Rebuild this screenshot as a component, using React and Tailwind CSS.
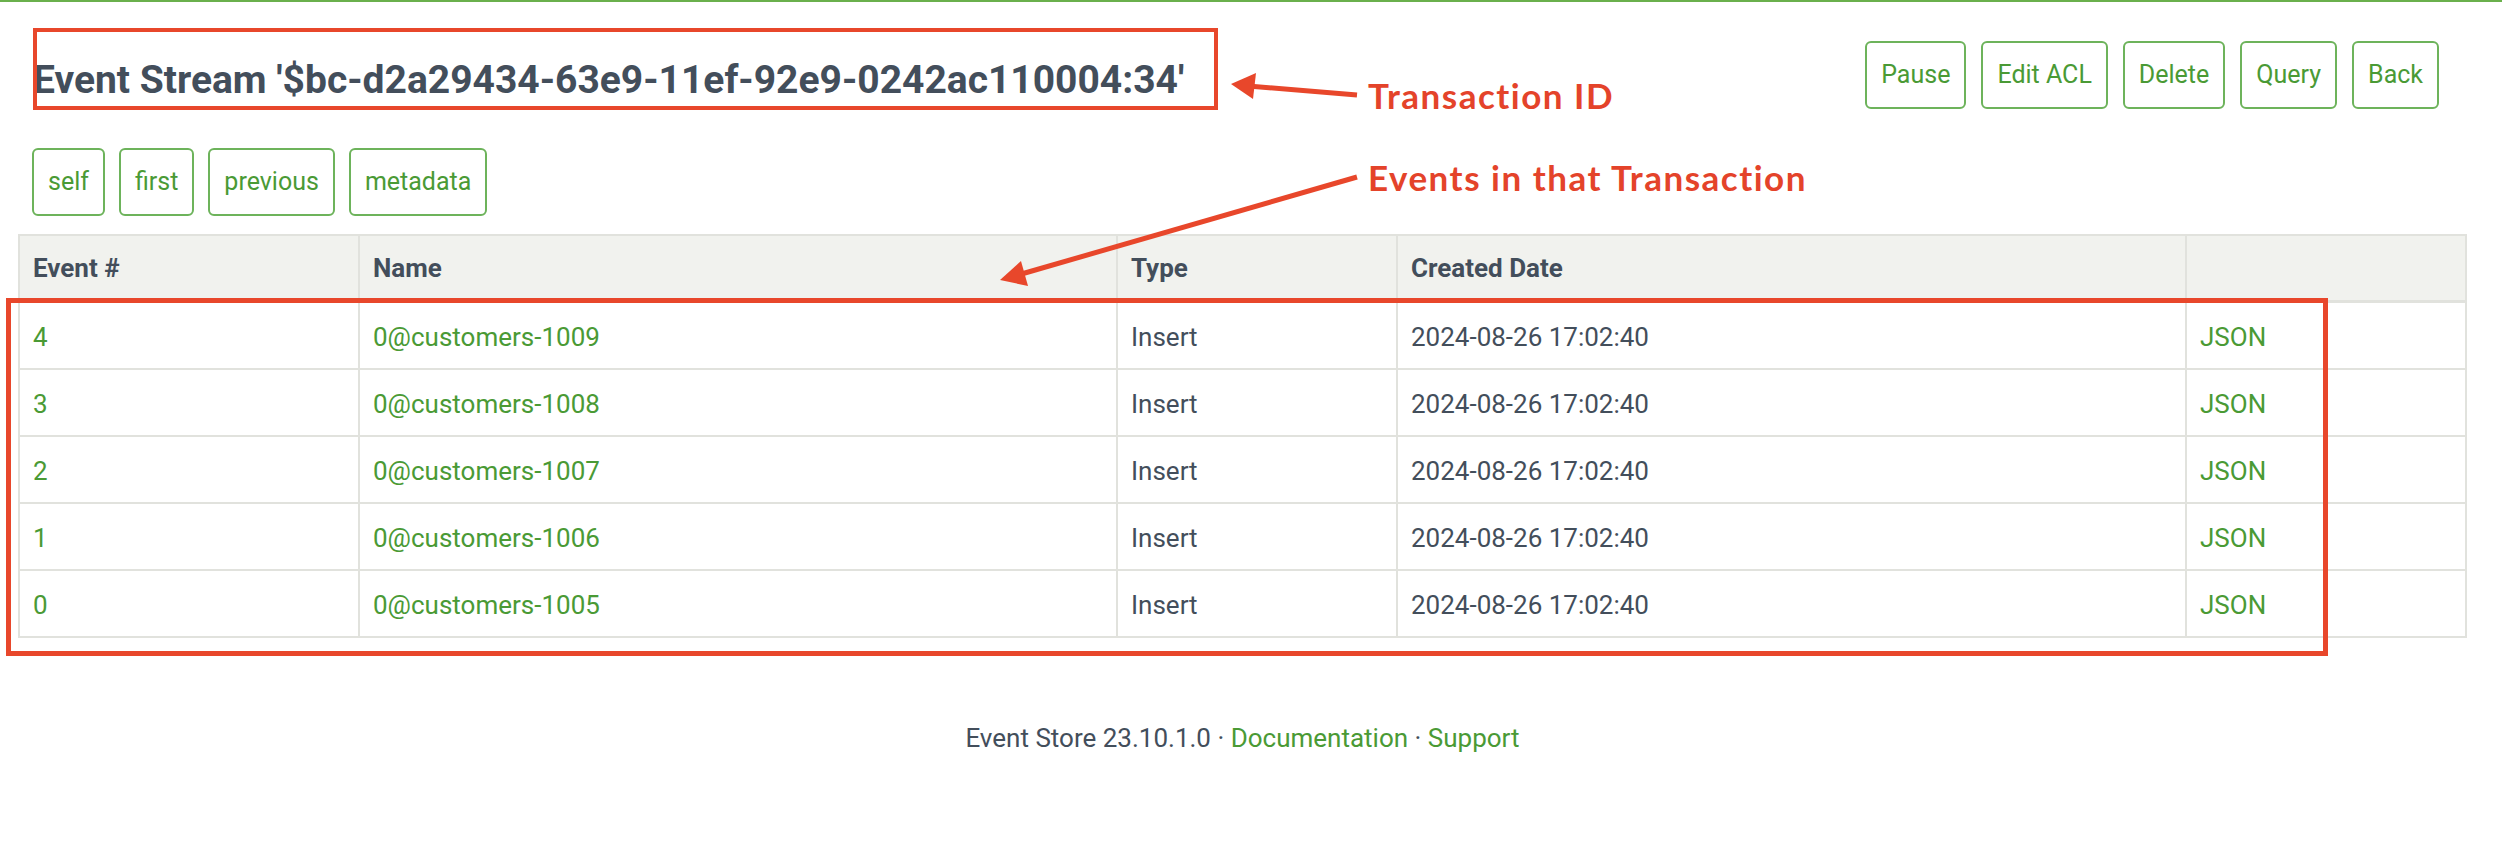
import React from 'react';

const actions = ['Pause', 'Edit ACL', 'Delete', 'Query', 'Back'];
const links = ['self', 'first', 'previous', 'metadata'];

const events = [
  { num: 4, name: '0@customers-1009' },
  { num: 3, name: '0@customers-1008' },
  { num: 2, name: '0@customers-1007' },
  { num: 1, name: '0@customers-1006' },
  { num: 0, name: '0@customers-1005' },
];

// Outlined green button used in both toolbars
const OutlineButton = ({ children }) => (
  <button
    type="button"
    className="h-[68px] px-[14px] border-2 border-[#6db35b] rounded-[6px] text-[25px] leading-[40px] text-[#4a9a35] bg-white"
  >
    {children}
  </button>
);

const App = () => {
  return (
    <div
      className="relative w-full min-h-[846px] bg-white border-t-2 border-[#6ab04c] text-[#434e5b]"
      style={{ fontFamily: 'Roboto, "Liberation Sans", sans-serif' }}
    >
      {/* Header */}
      <div className="flex items-start justify-between pl-[33px] pr-[63px] pt-[39px]">
        <h1 className="mt-[15px] text-[39px] leading-[48px] font-bold">
          Event Stream '$bc-d2a29434-63e9-11ef-92e9-0242ac110004:34'
        </h1>
        <div className="flex gap-[15px]">
          {actions.map((a) => (
            <OutlineButton key={a}>{a}</OutlineButton>
          ))}
        </div>
      </div>

      {/* Paging links */}
      <div className="flex gap-[14px] pl-[32px] mt-[39px]">
        {links.map((l) => (
          <OutlineButton key={l}>{l}</OutlineButton>
        ))}
      </div>

      {/* Events table */}
      <div className="pl-[18px] pr-[35px] mt-[18px]">
        <table className="w-full table-fixed border-collapse border-2 border-[#e1e2dd] text-[26px] leading-[40px]">
          <colgroup>
            <col className="w-[340px]" />
            <col className="w-[758px]" />
            <col className="w-[280px]" />
            <col className="w-[789px]" />
            <col />
          </colgroup>
          <thead>
            <tr className="bg-[#f1f2ee] border-b-[3px] border-[#e1e2dd]">
              {['Event #', 'Name', 'Type', 'Created Date', ''].map((h, i) => (
                <th
                  key={i}
                  className="text-left font-bold px-[13px] py-[12px] border-r-2 border-[#e1e2dd]"
                >
                  {h}
                </th>
              ))}
            </tr>
          </thead>
          <tbody>
            {events.map((e) => (
              <tr key={e.num} className="border-b-2 border-[#e1e2dd]">
                <td className="px-[13px] pt-[14px] pb-[11px] border-r-2 border-[#e1e2dd] text-[#4a9a35]">
                  {e.num}
                </td>
                <td className="px-[13px] pt-[14px] pb-[11px] border-r-2 border-[#e1e2dd] text-[#4a9a35]">
                  {e.name}
                </td>
                <td className="px-[13px] pt-[14px] pb-[11px] border-r-2 border-[#e1e2dd]">Insert</td>
                <td className="px-[13px] pt-[14px] pb-[11px] border-r-2 border-[#e1e2dd]">
                  2024-08-26 17:02:40
                </td>
                <td className="px-[13px] pt-[14px] pb-[11px] text-[#4a9a35]">JSON</td>
              </tr>
            ))}
          </tbody>
        </table>

        {/* Footer */}
        <p className="mt-[80px] text-center text-[26px] leading-[40px]">
          Event Store 23.10.1.0 · <span className="text-[#4a9a35]">Documentation</span> ·{' '}
          <span className="text-[#4a9a35]">Support</span>
        </p>
      </div>

      {/* Annotations */}
      <div className="absolute left-[33px] top-[26px] w-[1185px] h-[82px] border-4 border-[#e8472b] pointer-events-none" />
      <div className="absolute left-[6px] top-[296px] w-[2322px] h-[358px] border-[5px] border-[#e8472b] pointer-events-none" />

      <svg
        className="absolute left-0 top-0 pointer-events-none"
        width="2502"
        height="846"
        viewBox="0 0 2502 846"
      >
        <line x1="1357" y1="93" x2="1248" y2="84" stroke="#e8472b" strokeWidth="5" />
        <polygon points="1231,82 1256,71 1253,97" fill="#e8472b" />
        <line x1="1357" y1="175" x2="1018" y2="273" stroke="#e8472b" strokeWidth="5" />
        <polygon points="1000,278 1021,259 1028,284" fill="#e8472b" />
      </svg>

      <span
        className="absolute left-[1368px] top-[76px] text-[35px] leading-none font-bold tracking-[1.5px] text-[#e4432a] whitespace-nowrap"
        style={{ fontFamily: 'Lato, "Open Sans", sans-serif' }}
      >
        Transaction ID
      </span>
      <span
        className="absolute left-[1368px] top-[158px] text-[35px] leading-none font-bold tracking-[1.5px] text-[#e4432a] whitespace-nowrap"
        style={{ fontFamily: 'Lato, "Open Sans", sans-serif' }}
      >
        Events in that Transaction
      </span>
    </div>
  );
};

export default App;
